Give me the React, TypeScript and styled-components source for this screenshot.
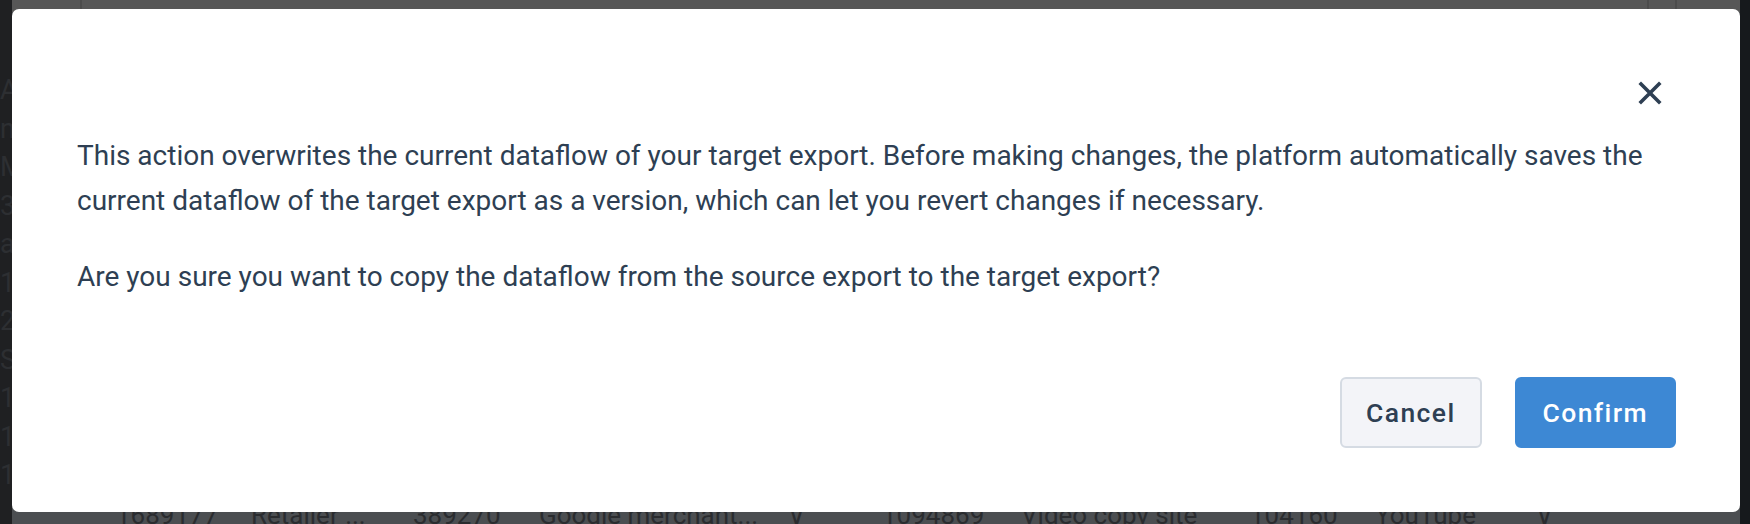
import React from "react";
import styled, { createGlobalStyle } from "styled-components";

const GlobalStyle = createGlobalStyle`
  html, body {
    margin: 0;
    padding: 0;
    width: 1750px;
    height: 524px;
    overflow: hidden;
    background: #4b4e51;
  }
  * { box-sizing: border-box; }
`;

const Page = styled.div`
  position: relative;
  display: flex;
  width: 1750px;
  height: 524px;
  font-family: Roboto, "Liberation Sans", sans-serif;
`;

const LeftRail = styled.div`
  width: 12px;
  flex: none;
  background: #1f2022;
  display: flex;
  flex-direction: column;
  padding-top: 71px;
  overflow: hidden;
  color: #2d2f32;
  font-size: 27px;
  line-height: 38.5px;
`;

const RightRail = styled.div`
  width: 10px;
  flex: none;
  background: #16191c;
`;

const Main = styled.div`
  flex: 1;
  display: flex;
  flex-direction: column;
  justify-content: space-between;
  background: #4b4e51;
`;

const TopBar = styled.div`
  height: 12px;
  background: #575757;
  display: grid;
  grid-template-columns: 68px 2px 1565px 2px 26px 2px 1fr;
`;

const BarLine = styled.div`
  background: #4c4c4c;
`;

const TableRow = styled.div`
  display: flex;
  align-items: flex-start;
  height: 24px;
  overflow: hidden;
  color: #2a2c2f;
  font-size: 26px;
  line-height: 30px;
  margin-top: -10px;
`;

const Cell = styled.span<{ $w: number }>`
  width: ${(p) => p.$w}px;
  flex: none;
  white-space: nowrap;
`;

const Overlay = styled.div`
  position: absolute;
  top: 9px;
  left: 12px;
  right: 10px;
  bottom: 12px;
  display: flex;
`;

const Dialog = styled.div`
  flex: 1;
  background: #ffffff;
  border-radius: 7px;
  padding: 64px 64px 64px 65px;
  display: flex;
  flex-direction: column;
`;

const Header = styled.div`
  display: flex;
  justify-content: flex-end;
  height: 40px;
  padding-right: 6px;
`;

const CloseButton = styled.button`
  width: 40px;
  height: 40px;
  border: 0;
  background: transparent;
  padding: 0;
  display: flex;
  align-items: center;
  justify-content: center;
  cursor: pointer;
`;

const Body = styled.div`
  margin-top: 21px;
  color: #2e3f53;
  font-size: 28px;
  line-height: 44.8px;
  letter-spacing: 0;
`;

const Paragraph = styled.p`
  margin: 0 0 31px;
  &:last-child { margin-bottom: 0; }
`;

const Footer = styled.div`
  margin-top: auto;
  display: flex;
  justify-content: flex-end;
  gap: 33px;
`;

const Button = styled.button<{ $primary?: boolean }>`
  height: 71px;
  padding: 0 ${(p) => (p.$primary ? 26 : 24)}px;
  border-radius: 6px;
  font-family: Roboto, "Liberation Sans", sans-serif;
  font-size: 26.5px;
  font-weight: 500;
  letter-spacing: 1.4px;
  cursor: pointer;
  border: 2px solid ${(p) => (p.$primary ? "#3d88d4" : "#d5dbe3")};
  background: ${(p) => (p.$primary ? "#3d88d4" : "#f3f4f8")};
  color: ${(p) => (p.$primary ? "#ffffff" : "#2e3f53")};
`;

const CloseIcon = () => (
  <svg width="24" height="24" viewBox="0 0 24 24" aria-hidden="true">
    <path d="M3 3 L21 21 M21 3 L3 21" stroke="#2e3f53" strokeWidth="3.6" strokeLinecap="square" />
  </svg>
);

const railLetters = ["A", "n", "M", "3", "a", "1", "2", "S", "1", "1", "1"];

export default function App() {
  return (
    <>
      <GlobalStyle />
      <Page>
        <LeftRail>
          {railLetters.map((l, i) => (
            <span key={i}>{l}</span>
          ))}
        </LeftRail>
        <Main>
          <TopBar>
            <div />
            <BarLine />
            <div />
            <BarLine />
            <div />
            <BarLine />
            <div />
          </TopBar>
          <TableRow>
            <Cell $w={104} />
            <Cell $w={135}>1689177</Cell>
            <Cell $w={162}>Retailer ...</Cell>
            <Cell $w={126}>389270</Cell>
            <Cell $w={248}>Google merchant...</Cell>
            <Cell $w={95}>∨</Cell>
            <Cell $w={139}>1094869</Cell>
            <Cell $w={229}>Video copy site</Cell>
            <Cell $w={125}>104160</Cell>
            <Cell $w={160}>YouTube</Cell>
            <Cell $w={60}>∨</Cell>
          </TableRow>
        </Main>
        <RightRail />
        <Overlay>
          <Dialog role="dialog" aria-modal="true">
            <Header>
              <CloseButton aria-label="Close">
                <CloseIcon />
              </CloseButton>
            </Header>
            <Body>
              <Paragraph>
                This action overwrites the current dataflow of your target export. Before making changes, the platform
                automatically saves the current dataflow of the target export as a version, which can let you revert
                changes if necessary.
              </Paragraph>
              <Paragraph>Are you sure you want to copy the dataflow from the source export to the target export?</Paragraph>
            </Body>
            <Footer>
              <Button>Cancel</Button>
              <Button $primary>Confirm</Button>
            </Footer>
          </Dialog>
        </Overlay>
      </Page>
    </>
  );
}
